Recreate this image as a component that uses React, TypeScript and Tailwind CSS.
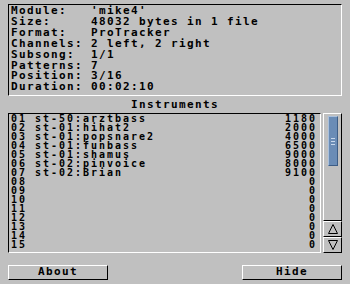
const info = [
  ["Module:", "'mike4'"],
  ["Size:", "48032 bytes in 1 file"],
  ["Format:", "ProTracker"],
  ["Channels:", "2 left, 2 right"],
  ["Subsong:", "1/1"],
  ["Patterns:", "7"],
  ["Position:", "3/16"],
  ["Duration:", "00:02:10"],
];

const instruments = [
  ["01", "st-50:arztbass", "1180"],
  ["02", "st-01:hihat2", "2000"],
  ["03", "st-01:popsnare2", "4000"],
  ["04", "st-01:funbass", "6500"],
  ["05", "st-01:shamus", "9000"],
  ["06", "st-02:pinvoice", "8000"],
  ["07", "st-02:Brian", "9100"],
  ["08", "", "0"],
  ["09", "", "0"],
  ["10", "", "0"],
  ["11", "", "0"],
  ["12", "", "0"],
  ["13", "", "0"],
  ["14", "", "0"],
  ["15", "", "0"],
];

function Arrow({ down }: { down?: boolean }) {
  return (
    <svg width="10" height="10" viewBox="0 0 10 10">
      <polygon
        points={down ? "0.5,0.5 9.5,0.5 5,9.5" : "0.5,9.5 9.5,9.5 5,0.5"}
        fill="none"
        stroke="#000"
        strokeWidth="1"
      />
    </svg>
  );
}

export default function App() {
  return (
    <div className="w-[350px] h-[284px] bg-[#c0c0c0] text-black font-['DejaVu_Sans_Mono',monospace] font-bold text-[11px] tracking-[1.38px] flex flex-col px-[8px] pt-[4px] overflow-hidden">
      {/* module info */}
      <div className="h-[92px] border-t border-l border-black border-b-white border-r-white border-b border-r pl-[2px] pt-[1px] leading-[10.9px] shrink-0">
        {info.map(([label, value]) => (
          <div key={label} className="whitespace-pre">
            {label.padEnd(10)}
            {value}
          </div>
        ))}
      </div>

      <div className="mt-[3px] h-[11px] leading-[11px] text-center shrink-0">Instruments</div>

      <div className="mt-[3px] flex h-[140px] shrink-0">
        <div className="w-[313px] border-t border-l border-black border-b border-r border-b-white border-r-white pl-[2px] pr-[3px] text-[10px] tracking-[1.98px] leading-[9px]">
          {instruments.map(([num, name, size]) => (
            <div key={num} className="flex justify-between h-[9px] whitespace-pre">
              <span>
                {num} {name}
              </span>
              <span>{size}</span>
            </div>
          ))}
        </div>

        <div className="ml-[2px] w-[19px] flex flex-col">
          <div className="h-[108px] border-t border-l border-white border-b border-r border-b-black border-r-black pl-[4px] pr-[3px] pt-[2px]">
            <div className="h-[50px] bg-[#6a8cb6] border-t border-l border-[#a9c0dc] border-b border-r border-b-[#3d5d86] border-r-[#3d5d86] flex flex-col items-center justify-center gap-[2px]">
              <div className="w-[4px] h-px bg-[#c8d8ec]" />
              <div className="w-[4px] h-px bg-[#c8d8ec]" />
              <div className="w-[4px] h-px bg-[#c8d8ec]" />
            </div>
          </div>
          <div className="h-[16px] border-t border-l border-white border-b border-r border-b-black border-r-black flex items-center justify-center">
            <Arrow />
          </div>
          <div className="h-[16px] border-t border-l border-white border-b border-r border-b-black border-r-black flex items-center justify-center">
            <Arrow down />
          </div>
        </div>
      </div>

      <div className="mt-[12px] flex justify-between shrink-0">
        <button className="w-[100px] h-[15px] border-t border-l border-white border-b border-r border-b-black border-r-black leading-[11px] pb-[2px] flex items-center justify-center">
          About
        </button>
        <button className="w-[100px] h-[15px] border-t border-l border-white border-b border-r border-b-black border-r-black leading-[11px] pb-[2px] flex items-center justify-center">
          Hide
        </button>
      </div>
    </div>
  );
}
